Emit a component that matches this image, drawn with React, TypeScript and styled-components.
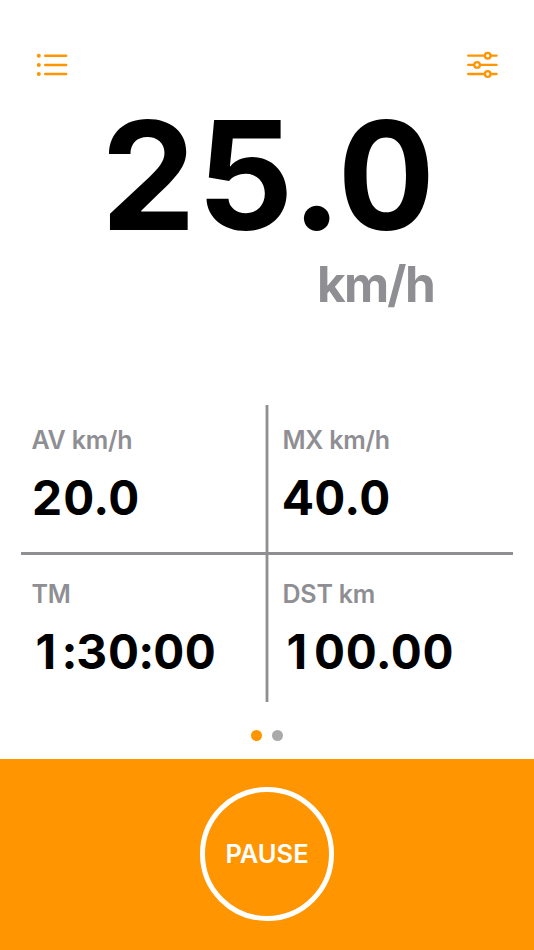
import React from 'react';
import styled, { createGlobalStyle } from 'styled-components';

const GlobalStyle = createGlobalStyle`
  * {
    box-sizing: border-box;
  }

  body {
    margin: 0;
    background: #fff;
    font-family: Inter, 'Liberation Sans', sans-serif;
  }
`;

const Screen = styled.div`
  display: flex;
  flex-direction: column;
  width: 534px;
  height: 950px;
  overflow: hidden;
  background: #fff;
`;

const Toolbar = styled.header`
  display: flex;
  justify-content: space-between;
  height: 80px;
  padding: 50px 36px 0;
`;

const IconButton = styled.button`
  width: 32px;
  height: 30px;
  padding: 0;
  border: 0;
  background: none;
  color: #ff9500;
  cursor: pointer;

  svg {
    display: block;
  }
`;

const Speed = styled.section`
  display: flex;
  flex-direction: column;
  align-items: flex-end;
  height: 325px;
  padding: 15px 98px 0 0;
`;

const SpeedValue = styled.div`
  font-size: 151px;
  font-weight: 700;
  line-height: 160px;
  letter-spacing: 0.8px;
  font-variant-numeric: tabular-nums;
  white-space: nowrap;
`;

const SpeedUnit = styled.div`
  margin: 1px 2px 0 0;
  font-size: 49.5px;
  font-weight: 700;
  line-height: 56px;
  letter-spacing: -1.7px;
  color: #8e8e93;
`;

const Grid = styled.main`
  display: grid;
  grid-template-columns: 244px 4px 244px;
  grid-template-rows: 147px 3px 147px;
  margin: 0 21px;
`;

const Metric = styled.div<{ $indent: number; $top: number }>`
  padding: ${({ $top }) => $top}px 0 0 ${({ $indent }) => $indent}px;
`;

const MetricLabel = styled.div`
  font-size: 25px;
  font-weight: 600;
  line-height: 32px;
  letter-spacing: -0.2px;
  color: #8e8e93;
`;

const MetricValue = styled.div`
  margin-top: 12px;
  font-size: 48px;
  font-weight: 700;
  line-height: 60px;
  letter-spacing: 0.6px;
  font-variant-numeric: tabular-nums;
  white-space: nowrap;
`;

// The proportional "1" has no foot, so it gets a full digit width here
const NarrowDigit = styled.span`
  display: inline-block;
  width: 31.5px;
  padding-left: 4px;
  font-variant-numeric: proportional-nums;
`;

const VerticalRule = styled.div`
  grid-area: 1 / 2 / 4 / 3;
  border: solid #d2d2d4;
  border-width: 0 1px;
  background: #8e8e93;
`;

const HorizontalRule = styled.div`
  grid-area: 2 / 1 / 3 / 4;
  background: #8e8e93;
`;

const Pager = styled.nav`
  display: flex;
  justify-content: center;
  gap: 10px;
  height: 57px;
  padding-top: 28px;
`;

const Dot = styled.span<{ $active?: boolean }>`
  width: 11px;
  height: 11px;
  border-radius: 50%;
  background: ${({ $active }) => ($active ? '#ff9500' : '#aaa')};
`;

const Footer = styled.footer`
  display: flex;
  flex: 1;
  justify-content: center;
  padding-top: 28px;
  background: #ff9500;
`;

const PauseButton = styled.button`
  width: 134px;
  height: 134px;
  padding: 0 0 2px;
  border: 5px solid #fff;
  border-radius: 50%;
  background: none;
  color: #fff;
  font: 600 25.5px Inter, 'Liberation Sans', sans-serif;
  cursor: pointer;
`;

const ListIcon = () => (
  <svg width="32" height="30" viewBox="0 0 32 30" fill="currentColor">
    {[5.7, 14.9, 24].map((y) => (
      <g key={y}>
        <circle cx="2.8" cy={y} r="2" />
        <rect x="8" y={y - 1.25} width="23.3" height="2.5" rx="1.25" />
      </g>
    ))}
  </svg>
);

const SlidersIcon = () => (
  <svg width="32" height="30" viewBox="0 0 32 30" fill="none" stroke="currentColor" strokeWidth="2.3">
    <path
      d="M2.2 5.7H18.6M24.8 5.7H30.6M2.2 14.9H8M14.2 14.9H30.6M2.2 24H18.6M24.8 24H30.6"
      strokeLinecap="round"
    />
    <circle cx="21.7" cy="5.7" r="2.8" />
    <circle cx="11.1" cy="14.9" r="2.8" />
    <circle cx="21.7" cy="24" r="2.8" />
  </svg>
);

const App: React.FC = () => {
  return (
    <>
      <GlobalStyle />
      <Screen>
        <Toolbar>
          <IconButton aria-label="Menu">
            <ListIcon />
          </IconButton>
          <IconButton aria-label="Settings">
            <SlidersIcon />
          </IconButton>
        </Toolbar>
        <Speed>
          <SpeedValue>25.0</SpeedValue>
          <SpeedUnit>km/h</SpeedUnit>
        </Speed>
        <Grid>
          <Metric $indent={10.5} $top={19}>
            <MetricLabel>AV km/h</MetricLabel>
            <MetricValue>20.0</MetricValue>
          </Metric>
          <VerticalRule />
          <Metric $indent={13.5} $top={19}>
            <MetricLabel>MX km/h</MetricLabel>
            <MetricValue>40.0</MetricValue>
          </Metric>
          <HorizontalRule />
          <Metric $indent={10.5} $top={23}>
            <MetricLabel>TM</MetricLabel>
            <MetricValue>
              <NarrowDigit>1</NarrowDigit>:30:00
            </MetricValue>
          </Metric>
          <Metric $indent={13.5} $top={23}>
            <MetricLabel>DST km</MetricLabel>
            <MetricValue>
              <NarrowDigit>1</NarrowDigit>00.00
            </MetricValue>
          </Metric>
        </Grid>
        <Pager>
          <Dot $active />
          <Dot />
        </Pager>
        <Footer>
          <PauseButton>PAUSE</PauseButton>
        </Footer>
      </Screen>
    </>
  );
};

export default App;
